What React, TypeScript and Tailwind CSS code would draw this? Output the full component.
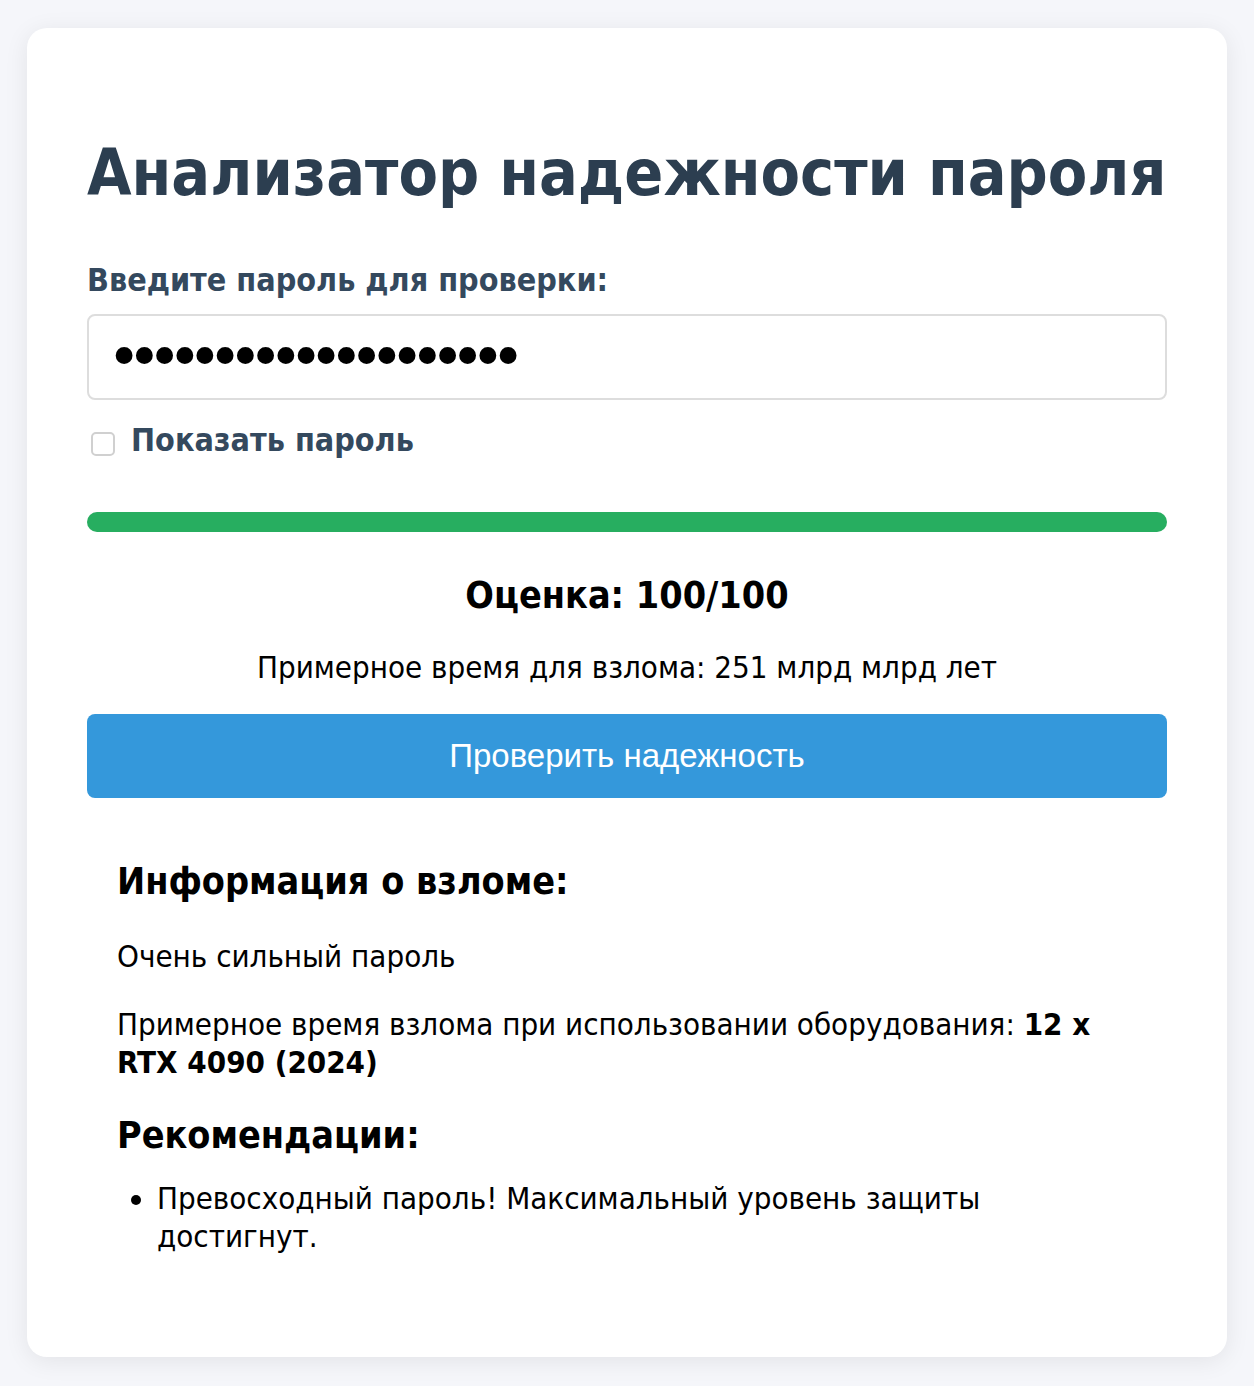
import { useState } from "react";

const tahoma = "font-['DejaVu_Sans_Condensed','DejaVu_Sans',sans-serif] font-stretch-condensed";

export default function App() {
  const [show, setShow] = useState(false);
  const [password, setPassword] = useState("Xk9#mPq2$vL7!wRt5&Zn");

  return (
    <div className={`min-h-screen bg-[#f5f6fa] pt-[28px] pb-[30px] ${tahoma}`}>
      <div className="mx-auto w-[1200px] rounded-[20px] bg-white px-[60px] pt-[107px] pb-[102px] shadow-[0_4px_24px_rgba(0,0,0,0.08)]">
        <h1 className="whitespace-nowrap text-[64px] font-bold leading-[1.2] text-[#2c3e50]">
          Анализатор надежности пароля
        </h1>

        <label className="mt-[49px] block text-[32px] font-bold leading-[1.2] text-[#34495e]">
          Введите пароль для проверки:
        </label>
        <input
          type={show ? "text" : "password"}
          value={password}
          onChange={(e) => setPassword(e.target.value)}
          className={`mt-[15px] block h-[86px] w-full rounded-[8px] border-2 border-[#dddddd] px-[18px] text-black outline-none font-['DejaVu_Sans',sans-serif] font-stretch-normal ${
            show ? "text-[32px]" : "text-[58px] tracking-[-14px]"
          }`}
        />

        <label className="mt-[21px] flex items-center gap-[16px] pl-[4px] text-[32px] font-bold leading-[1.2] text-[#34495e]">
          <input
            type="checkbox"
            checked={show}
            onChange={(e) => setShow(e.target.checked)}
            className="mt-[8px] size-[24px] appearance-none rounded-[5px] border-2 border-[#d0d0d0] bg-white"
          />
          Показать пароль
        </label>

        <div className="mt-[52px] h-[20px] w-full rounded-full bg-[#eeeeee]">
          <div className="h-full rounded-full bg-[#27ae60]" style={{ width: "100%" }} />
        </div>

        <p className="mt-[41px] text-center text-[37.44px] font-bold leading-[1.2] text-black">
          Оценка: 100/100
        </p>
        <p className="mt-[30px] text-center text-[31px] leading-[38px] text-black">
          Примерное время для взлома: 251 млрд млрд лет
        </p>

        <button className="mt-[28px] block h-[84px] w-full rounded-[8px] bg-[#3498db] text-[33px] text-white font-['Liberation_Sans',Arial,sans-serif] font-stretch-normal">
          Проверить надежность
        </button>

        <div className="mt-[61px] px-[30px] text-black">
          <h3 className="text-[37.44px] font-bold leading-[1.2]">Информация о взломе:</h3>
          <p className="mt-[34px] text-[31px] leading-[38px]">Очень сильный пароль</p>
          <p className="mt-[30px] text-[31px] leading-[38px]">
            Примерное время взлома при использовании оборудования: <b>12 x RTX 4090 (2024)</b>
          </p>
          <h3 className="mt-[32px] text-[37.44px] font-bold leading-[1.2]">Рекомендации:</h3>
          <ul className="mt-[21px] list-disc pl-[40px] text-[31px] leading-[38px]">
            <li>Превосходный пароль! Максимальный уровень защиты достигнут.</li>
          </ul>
        </div>
      </div>
    </div>
  );
}
